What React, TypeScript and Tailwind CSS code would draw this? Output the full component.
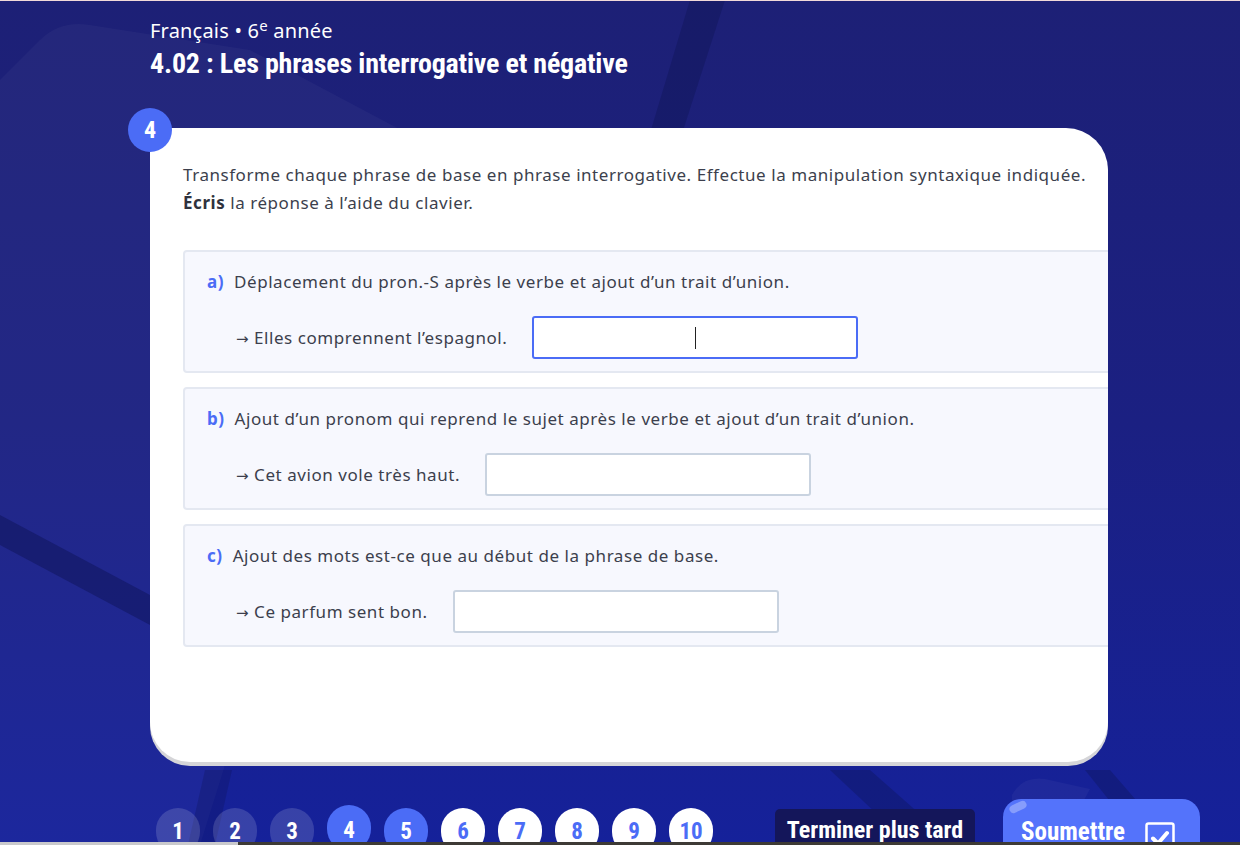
import React from "react";

const QUESTIONS = [
  {
    letter: "a)",
    consigne: "Déplacement du pron.-S après le verbe et ajout d’un trait d’union.",
    base: "Elles comprennent l’espagnol.",
    active: true,
  },
  {
    letter: "b)",
    consigne: "Ajout d’un pronom qui reprend le sujet après le verbe et ajout d’un trait d’union.",
    base: "Cet avion vole très haut.",
    active: false,
  },
  {
    letter: "c)",
    consigne: "Ajout des mots est-ce que au début de la phrase de base.",
    base: "Ce parfum sent bon.",
    active: false,
  },
];

const DISPLAY = { fontFamily: '"Liberation Sans Narrow", "Roboto Condensed", Roboto, sans-serif' };
const BODY = { fontFamily: '"Noto Sans", "Open Sans", sans-serif' };
const ARROW = { fontFamily: '"DejaVu Sans", sans-serif' };

function Background() {
  return (
    <svg className="absolute inset-0 pointer-events-none" width="1240" height="845" viewBox="0 0 1240 845">
      <path d="M40 40 Q60 20 90 25 L250 50 L420 140 L200 845 L0 845 L0 80 Z" fill="#ffffff" opacity="0.03" />
      <path d="M690 0 L725 0 L680 140 L648 140 Z" fill="#0b0f4a" opacity="0.3" />
      <path d="M0 515 L150 595 L150 625 L0 545 Z" fill="#0b0f4a" opacity="0.4" />
      <path d="M830 770 L870 770 L955 845 L910 845 Z" fill="#0b0f4a" opacity="0.3" />
      <path d="M1085 770 L1110 770 L1175 845 L1145 845 Z" fill="#0b0f4a" opacity="0.3" />
      <path d="M205 770 L232 770 L215 845 L188 845 Z" fill="#0b0f4a" opacity="0.25" />
      <path d="M1012 795 Q1022 776 1045 779 L1090 789 L1082 804 L1012 804 Z" fill="#ffffff" opacity="0.04" />
    </svg>
  );
}

function CheckBox() {
  return (
    <svg width="30" height="32" viewBox="0 0 30 32" fill="none">
      <rect x="1.5" y="1.5" width="27" height="29" rx="2" stroke="white" strokeWidth="2.5" />
      <path d="M8 16.5 L13 21.5 L22 11" stroke="white" strokeWidth="4" strokeLinecap="round" strokeLinejoin="round" />
    </svg>
  );
}

function Question({ q }: { q: (typeof QUESTIONS)[number] }) {
  return (
    <div className="-mr-[4px] h-[123px] rounded-l-[4px] border-2 border-[#e4e8f1] bg-[#f7f8fe] pl-[22px] pt-[18px] pb-[12px]">
      <div className="flex h-[24px] items-center gap-[10px] text-[17px] leading-[24px] tracking-[0.55px] text-[#3c3f4d]">
        <span className="font-bold text-[#4b6cf6]">{q.letter}</span>
        <span>{q.consigne}</span>
      </div>
      <div className="mt-[22px] ml-[29px] flex items-center gap-[25px] text-[17px] tracking-[0.55px] text-[#3c3f4d]">
        <span>
          <span style={ARROW} className="text-[15px]">→</span> {q.base}
        </span>
        <div
          className={`flex h-[43px] w-[326px] items-center justify-center rounded-[3px] border-2 bg-white ${
            q.active ? "border-[#4b6cf6]" : "border-[#c9d3e0]"
          }`}
        >
          {q.active && <span className="h-[22px] w-px bg-[#222]" />}
        </div>
      </div>
    </div>
  );
}

export default function App() {
  const pages = [1, 2, 3, 4, 5, 6, 7, 8, 9, 10];
  return (
    <div
      className="relative flex h-[845px] w-[1240px] flex-col overflow-hidden bg-gradient-to-b from-[#1d2076] via-[#1b2082] to-[#15219a]"
      style={BODY}
    >
      <Background />
      <div className="relative h-[5px] border-b border-[#f1d9d9] bg-[#fdf1f1]" />

      <header className="relative pl-[150px] pt-[17px] text-white">
        <div className="text-[20px] leading-[26px] tracking-[0.2px]">
          Français • 6<sup className="text-[15px] -top-[7px]">e</sup> année
        </div>
        <h1 className="mt-[4px] text-[28px] font-bold leading-[32px] tracking-[-0.2px]" style={DISPLAY}>
          4.02 : Les phrases interrogative et négative
        </h1>
      </header>

      <div className="relative ml-[150px] mt-[48px] w-[958px]">
        <div
          className="absolute -left-[22px] -top-[20px] z-10 flex h-[44px] w-[44px] items-center justify-center rounded-full bg-[#4b6cf6] text-[24px] font-bold text-white"
          style={DISPLAY}
        >
          4
        </div>
        <div className="h-[634px] overflow-hidden rounded-tr-[42px] rounded-b-[40px] bg-white pl-[33px] pt-[33px] shadow-[0_4px_0_#d5d5d8]">
          <p className="text-[17px] leading-[28px] tracking-[0.55px] text-[#3c3f4d]">
            Transforme chaque phrase de base en phrase interrogative. Effectue la manipulation syntaxique indiquée.
            <br />
            <b className="font-bold text-[#2f323d]">Écris</b> la réponse à l’aide du clavier.
          </p>
          <div className="mt-[33px] flex flex-col gap-[14px]">
            {QUESTIONS.map((q) => (
              <Question key={q.letter} q={q} />
            ))}
          </div>
        </div>
      </div>

      <div className="relative mt-[43px] flex items-start pl-[156px]">
        <div className="flex items-start gap-[13px]">
          {pages.map((n) => {
            const cls =
              n < 4
                ? "bg-white/15 text-white mt-[3px] pt-[2px]"
                : n === 4
                ? "bg-[#4b6cf6] text-white pt-[6px]"
                : n === 5
                ? "bg-[#4b6cf6] text-white mt-[3px] pt-[2px]"
                : "bg-white text-[#4b6cf6] mt-[3px] pt-[2px]";
            return (
              <div
                key={n}
                className={`flex h-[46px] w-[44px] items-center justify-center rounded-full text-[23px] font-bold ${cls}`}
                style={DISPLAY}
              >
                {n}
              </div>
            );
          })}
        </div>
        <div
          className="ml-[62px] mt-[4px] flex h-[46px] w-[200px] justify-center rounded-[5px] bg-[#14165a] pt-[6px] text-[24px] font-bold leading-[30px] text-white"
          style={DISPLAY}
        >
          Terminer plus tard
        </div>
        <div
          className="relative -mt-[6px] ml-[28px] flex h-[60px] w-[197px] items-start gap-[20px] rounded-t-[18px] bg-[#5473fb] pl-[18px] pt-[18px] text-[25px] font-bold text-white"
          style={DISPLAY}
        >
          <span className="absolute left-[6px] top-[4px] h-[8px] w-[18px] -rotate-[25deg] rounded-full bg-white/30" />
          <span className="leading-[30px]">Soumettre</span>
          <span className="mt-[5px]">
            <CheckBox />
          </span>
        </div>
      </div>

      <div className="absolute bottom-0 left-0 flex h-[3px] w-full">
        <div className="w-[238px] bg-[#c9c9cc]" />
        <div className="flex-1 bg-[#3d3a35]" />
      </div>
    </div>
  );
}
